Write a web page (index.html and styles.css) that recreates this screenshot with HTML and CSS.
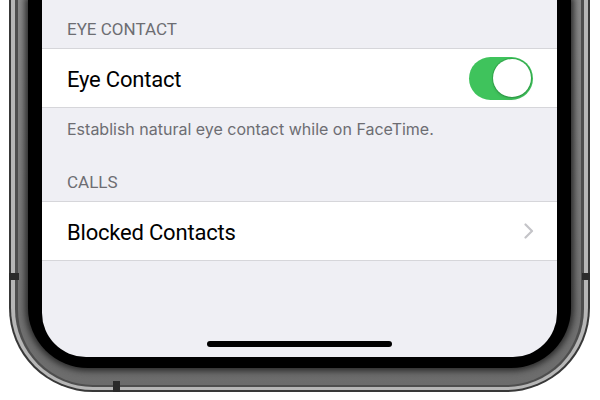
FILE: index.html
```html
<!DOCTYPE html>
<html lang="en">
<head>
    <meta charset="UTF-8">
    <meta name="viewport" content="width=device-width, initial-scale=1.0">
    <title>FaceTime Settings</title>
    <link rel="stylesheet" href="styles.css">
</head>
<body>
    <div class="phone">
        <div class="edge">
            <div class="groove">
                <div class="rim">
                    <div class="bezel">
                        <div class="screen">
                            <div class="group-header">EYE CONTACT</div>
                            <div class="cell">
                                <span class="cell-label">Eye Contact</span>
                                <span class="switch"><span class="knob"></span></span>
                            </div>
                            <div class="group-footer">Establish natural eye contact while on FaceTime.</div>
                            <div class="group-header">CALLS</div>
                            <div class="cell">
                                <span class="cell-label">Blocked Contacts</span>
                                <svg class="chevron" width="10" height="16" viewBox="0 0 10 16">
                                    <path d="M1.5 1.5 L8 8 L1.5 14.5" fill="none" stroke="#c4c4c8" stroke-width="2.2" stroke-linecap="round" stroke-linejoin="round"/>
                                </svg>
                            </div>
                            <div class="home-indicator"></div>
                        </div>
                    </div>
                </div>
            </div>
        </div>
        <span class="antenna antenna-left"></span>
        <span class="antenna antenna-right"></span>
        <span class="antenna antenna-bottom"></span>
    </div>
</body>
</html>
```

FILE: styles.css
```css
body {
    margin: 0;
    background: #ffffff;
    font-family: Inter, "Noto Sans", sans-serif;
}

.phone {
    position: relative;
    width: 581px;
    margin-left: 9px;
    padding: 0 2px 2px;
    box-sizing: border-box;
    background: #383838;
    border-radius: 0 0 84px 84px;
}

.edge {
    padding: 0 4px 3px;
    background: #b6b6b6;
    border-radius: 0 0 82px 82px;
}

.groove {
    padding: 0 3px 2px;
    background: #4e4e4e;
    border-radius: 0 0 78px 78px;
}

.rim {
    padding: 0 10px 17px;
    background: linear-gradient(#8a8a8a, #6c6c6c);
    border-radius: 0 0 75px 75px;
}

.bezel {
    padding: 0 14px 11px;
    background: #000;
    border-radius: 0 0 60px 60px;
    box-shadow: 0 0 6px 3px #2a2a2a;
}

.screen {
    height: 357px;
    display: flex;
    flex-direction: column;
    background: #efeff4;
    border-radius: 0 0 44px 44px;
    overflow: hidden;
}

.group-header {
    padding: 19px 25px 9px;
    font-family: Roboto, sans-serif;
    font-size: 17px;
    line-height: 20px;
    color: #6d6d72;
}

.group-footer + .group-header {
    padding-top: 33px;
}

.cell {
    height: 58px;
    display: flex;
    align-items: center;
    justify-content: space-between;
    padding: 0 24px 0 25px;
    background: #fff;
    border-top: 1px solid #d6d6da;
    border-bottom: 1px solid #d6d6da;
}

.cell-label {
    margin-top: 2px;
    font-family: Roboto, sans-serif;
    font-size: 22px;
    letter-spacing: -0.2px;
    color: #000;
}

.switch {
    width: 64px;
    height: 43px;
    box-sizing: border-box;
    padding: 2px;
    display: flex;
    justify-content: flex-end;
    align-items: center;
    background: #3fc35c;
    border-radius: 22px;
}

.knob {
    width: 38px;
    height: 38px;
    border-radius: 50%;
    background: #fff;
    box-shadow: 0 0 0 1px rgba(30, 120, 50, 0.35), 0 2px 3px rgba(0, 0, 0, 0.12);
}

.chevron {
    margin-right: -1px;
}

.group-footer {
    padding: 11px 25px 0;
    font-size: 16px;
    line-height: 20px;
    color: #6d6d72;
}

.home-indicator {
    width: 185px;
    height: 6px;
    margin: auto auto 10px;
    background: #000;
    border-radius: 3px;
}

.antenna {
    position: absolute;
    background: #2a2a2a;
}

.antenna-left {
    left: 0;
    top: 273px;
    width: 10px;
    height: 7px;
}

.antenna-right {
    right: 0;
    top: 273px;
    width: 8px;
    height: 7px;
}

.antenna-bottom {
    left: 104px;
    bottom: 0;
    width: 7px;
    height: 11px;
}
```
